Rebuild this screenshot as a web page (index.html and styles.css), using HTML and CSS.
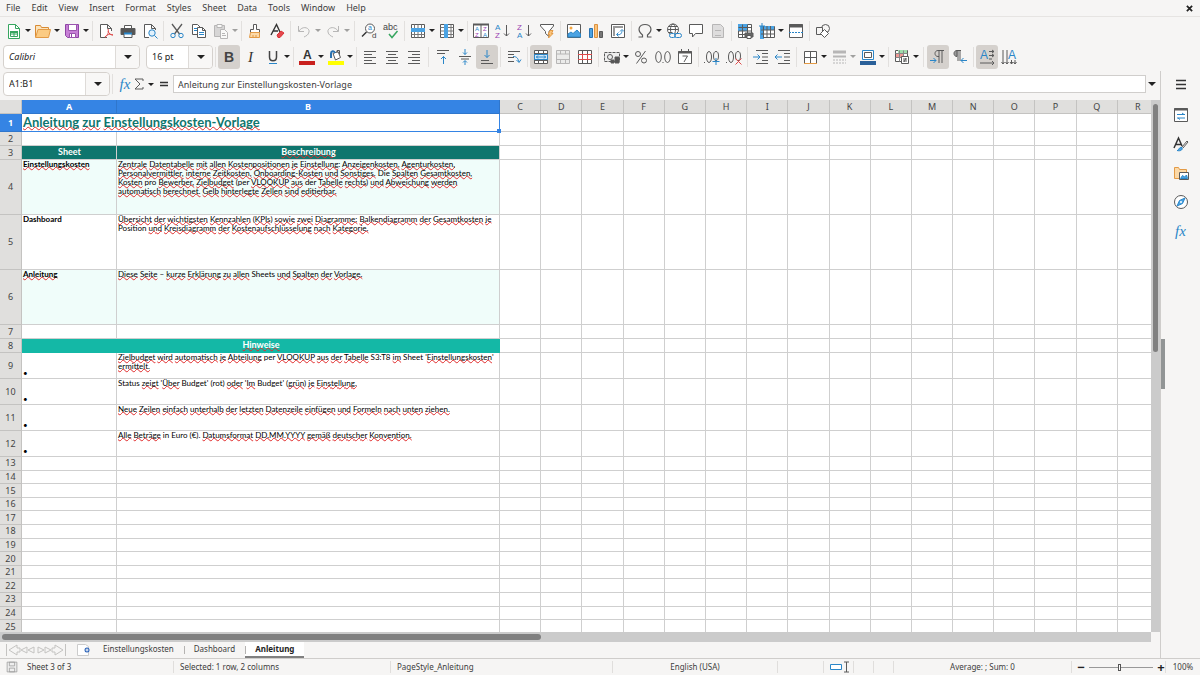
FILE: index.html
```
<!DOCTYPE html>
<html lang="de">
<head>
    <meta charset="UTF-8">
    <meta name="viewport" content="width=device-width, initial-scale=1.0">
    <title>Anleitung - Calc</title>
    <link rel="stylesheet" href="styles.css">
</head>
<body>
    <!-- Menu bar -->
    <nav class="menubar">
        <button>File</button><button>Edit</button><button>View</button><button>Insert</button><button>Format</button><button>Styles</button><button>Sheet</button><button>Data</button><button>Tools</button><button>Window</button><button>Help</button>
        <button class="close" aria-label="Close"><svg viewBox="0 0 8 8" width="7" height="7"><path d="M1 1l6 6M7 1L1 7" stroke="#222" stroke-width="2"/></svg></button>
    </nav>

    <!-- Standard toolbar -->
    <div class="toolbar standard">
        <button class="tool drop" aria-label="New"><svg viewBox="0 0 16 16"><path class="g" fill="#fff" d="M2.500 1.500h7l4 4v10h-11z"/><path class="g" d="M9.500 1.500v4h4M4.500 8.500h7v5h-7zM4.500 11h7M8 8.500v5"/><path d="M4 8h8v2H4z" fill="#37a660" stroke="none"/></svg></button>
        <button class="tool drop" aria-label="Open"><svg viewBox="0 0 16 16"><path d="M.5 14V2.500h5l1 2h7v3" fill="#fbe3bb" stroke="#d98b34"/><path d="M.5 14.500L3 6.500h12.500l-2 8z" fill="#fbcb83" stroke="#e39a45"/></svg></button>
        <button class="tool drop" aria-label="Save"><svg viewBox="0 0 16 16"><path d="M1.500 1.500h13v13h-11l-2-2z" fill="#c77fd6" stroke="#8e44a5"/><path d="M4.500 1.500h8v6h-8zM5.500 10.500h6v4h-6z" fill="#fff" stroke="#9a55ae"/><path d="M7.500 11v3" stroke="#8e44a5"/></svg></button>
        <span class="sep"></span>
        <button class="tool" aria-label="Export as PDF"><svg viewBox="0 0 16 16"><path fill="#fff" d="M9 14.500H2.500v-13h7l4 4V8M9.500 1.500v4h4"/><path class="r" d="M10 6c1 3 0 6-3 8.500M10 8c1 3 3 4 5 4M7 14c2-3 5-3 8-2"/></svg></button>
        <button class="tool" aria-label="Print"><svg viewBox="0 0 16 16"><path d="M4.500 5V2.500h7V5" fill="#fff"/><path d="M1 5.500h14v6H1z" fill="#555"/><path d="M4 10.500h8v4H4z" fill="#fff" stroke="#555"/><path class="b" d="M4 10.500h8" stroke-width="2"/></svg></button>
        <button class="tool" aria-label="Print preview"><svg viewBox="0 0 16 16"><path fill="#fff" d="M7 14.500H2.500v-13h7l4 4V7M9.500 1.500v4h4"/><circle class="b" cx="10" cy="10" r="3.200" fill="#e2f1fc"/><path class="b" d="M12.500 12.500l3 3"/></svg></button>
        <span class="sep"></span>
        <button class="tool" aria-label="Cut"><svg viewBox="0 0 16 16"><path stroke-width="1.300" d="M3 1l7.500 10M13 1L5.500 11"/><circle class="b" cx="4" cy="12.500" r="2.200"/><circle class="b" cx="12" cy="12.500" r="2.200"/></svg></button>
        <button class="tool" aria-label="Copy"><svg viewBox="0 0 16 16"><path fill="#fff" d="M1.500 1.500h5l3 3v7h-8z"/><path class="b" d="M3 5.500h3M3 7.500h3"/><path fill="#fff" d="M6.500 4.500h5l3 3v7h-8z"/><path d="M11.500 4.500v3h3"/><path class="b" d="M8 9.500h5M8 11.500h5"/></svg></button>
        <button class="tool drop dim" aria-label="Paste"><svg viewBox="0 0 16 16"><path fill="#aaa" d="M1.500 2.500h10v11h-10z"/><path fill="#fff" d="M4 1.500h5v3H4zM7.500 6.500h4l3 3v6h-7z"/><path d="M9 10.500h3M9 12.500h4"/></svg></button>
        <span class="sep"></span>
        <button class="tool" aria-label="Clone formatting"><svg viewBox="0 0 16 16"><path fill="#fff" d="M6.500 1.500h3v5h3v3h-9v-3h3z"/><path class="o" fill="#fbd9a8" d="M3.500 9.500h9v5h-10z"/><path class="o" d="M6 12v2M9 12v2"/></svg></button>
        <button class="tool" aria-label="Clear formatting"><svg viewBox="0 0 16 16"><path stroke="#333" stroke-width="1.400" d="M2 12L7.500 1.500L11 9M4 8h5"/><path fill="#e5484d" stroke="#d93237" d="M8 12l4-4 3 2-4 4.500H9z"/></svg></button>
        <span class="sep"></span>
        <button class="tool drop dim" aria-label="Undo"><svg viewBox="0 0 16 16"><path d="M2.500 3v5.500H8M3 8c4-6 11-3 10 1-.5 3-3 4-5 5"/></svg></button>
        <button class="tool drop dim" aria-label="Redo"><svg viewBox="0 0 16 16"><path d="M13.500 3v5.500H8M13 8C9 2 2 5 3 9c.5 3 3 4 5 5"/></svg></button>
        <span class="sep wide"></span>
        <button class="tool" aria-label="Find and replace"><svg viewBox="0 0 16 16"><circle cx="9" cy="5.500" r="4.500" fill="#fff"/><path stroke="#333" stroke-width="1.500" d="M5.500 9L1 13.500"/><text x="7" y="7" font-size="7" fill="#2a86c8">a</text><text x="11" y="15" font-size="8" fill="#444">d</text></svg></button>
        <button class="tool" aria-label="Spelling"><svg viewBox="0 0 16 16"><text x="0" y="7" font-size="9" fill="#444">abc</text><path class="g" stroke-width="1.500" d="M6 11l3 3.500L14.500 8"/></svg></button>
        <span class="sep"></span>
        <button class="tool drop" aria-label="Row"><svg viewBox="0 0 16 16"><path fill="#fff" d="M1.500 1.500h13v13h-13z"/><path d="M1.500 11.500h13M4.500 1.500v13M8 1.500v13M11.500 1.500v13" stroke="#777"/><path fill="#4ba3e3" stroke="none" d="M1 5h14v4H1z"/></svg></button>
        <button class="tool drop" aria-label="Column"><svg viewBox="0 0 16 16"><path fill="#fff" d="M1.500 1.500h13v13h-13z"/><path d="M12 1.500v13M1.500 4.500h13M1.500 8h13M1.500 11.500h13" stroke="#777"/><path fill="#4ba3e3" stroke="none" d="M5 1h4v14H5z"/></svg></button>
        <span class="sep"></span>
        <button class="tool" aria-label="Sort"><svg viewBox="0 0 16 16"><path fill="#fff" d="M.5 1.500h15v13H.5zM8 1v14"/><path d="M0 1.500h16" stroke-width="2"/><g font-size="6"><text x="2" y="8" fill="#2a86c8">A</text><text x="2" y="14" fill="#9a42b0">Z</text><text x="10" y="8" fill="#9a42b0">Z</text><text x="10" y="14" fill="#2a86c8">A</text></g></svg></button>
        <button class="tool" aria-label="Sort ascending"><svg viewBox="0 0 16 16"><g font-size="8"><text x="0" y="7" fill="#2a86c8">A</text><text x="0" y="15" fill="#9a42b0">Z</text></g><path d="M11.500 2v11M9 10.500l2.500 2.500 2.500-2.500"/></svg></button>
        <button class="tool" aria-label="Sort descending"><svg viewBox="0 0 16 16"><g font-size="8"><text x="0" y="7" fill="#9a42b0">Z</text><text x="0" y="15" fill="#2a86c8">A</text></g><path d="M11.500 2v11M9 10.500l2.500 2.500 2.500-2.500"/></svg></button>
        <button class="tool" aria-label="AutoFilter"><svg viewBox="0 0 16 16"><path fill="#fff" d="M1.500 1.500h13v1.500L10 8.500v5L6.500 10.500v-2L1.500 3z"/><path class="o" fill="#fbc37a" d="M11 7.500h3l-1.500 3H14L9.500 15l1-3.500H9z"/></svg></button>
        <span class="sep"></span>
        <button class="tool" aria-label="Image"><svg viewBox="0 0 16 16"><path fill="#fff" d="M1.500 1.500h13v13h-13z"/><circle cx="5" cy="5" r="1.500" fill="#f5a742" stroke="none"/><path fill="#4ba3e3" stroke="#2a86c8" d="M2 14v-3l3-2 2 1.500L11 7l3.500 4v3z"/></svg></button>
        <button class="tool" aria-label="Chart"><svg viewBox="0 0 16 16"><path fill="#4ba3e3" stroke="#2a72b0" d="M1.500 5.500h3v9h-3z"/><path fill="#fbc37a" stroke="#dc9240" d="M6.500 1.500h3v13h-3z"/><path fill="#777" d="M11.500 8.500h3v6h-3z"/></svg></button>
        <button class="tool" aria-label="Pivot table"><svg viewBox="0 0 16 16"><path fill="#fff" d="M1.500 1.500h13v13h-13z"/><path stroke="#999" stroke-width="2" d="M3 4h10M4 3v10"/><path class="b" d="M7 11.500c3 1 5-1 5-4M10 8.500l2-2 2 2M8.500 9.500l-2 2 2 2"/></svg></button>
        <span class="sep"></span>
        <button class="tool drop" aria-label="Special character"><svg viewBox="0 0 16 16"><path stroke-width="1.200" d="M1.500 14h4v-2C-.5 7 2 1.500 8 1.500s8.500 5.500 2.500 10.500v2h4"/></svg></button>
        <button class="tool" aria-label="Hyperlink"><svg viewBox="0 0 16 16"><circle cx="7" cy="6.500" r="5.500" fill="#fff"/><ellipse cx="7" cy="6.500" rx="2.500" ry="5.500"/><path d="M1.500 6.500h11M2.500 3.500h9M2.500 9.500h4"/><rect class="b" x="3.500" y="10.500" width="6" height="4" rx="2" fill="#f6f5f4"/><rect class="b" x="8.500" y="10.500" width="7" height="4" rx="2"/></svg></button>
        <button class="tool" aria-label="Comment"><svg viewBox="0 0 16 16"><path fill="#fff" d="M1.500 1.500h13v9H7.500L4.500 14v-3.500h-3z"/></svg></button>
        <button class="tool dim" aria-label="Headers and footers"><svg viewBox="0 0 16 16"><path fill="#bbb" d="M2.500 1.500h8l3 3v10h-11z"/><path d="M5 7.500h6M5 12.500h6"/></svg></button>
        <span class="sep"></span>
        <button class="tool" aria-label="Print area"><svg viewBox="0 0 16 16"><path fill="#fff" d="M1.500 1.500h13v13h-13z"/><path fill="#4ba3e3" stroke="none" d="M1 1h10v7H1z"/><path d="M1.500 4.500h13M1.500 8h13M1.500 11.500h13M5.500 1.500v13M10.500 1.500v13"/><path fill="#666" d="M8 10h8v4H8z"/><path fill="#fff" d="M10 12.500h4v3h-4z"/></svg></button>
        <button class="tool drop" aria-label="Freeze"><svg viewBox="0 0 16 16"><path fill="#fff" d="M3.500 3.500h12v11h-12z"/><path fill="#4ba3e3" stroke="none" d="M1 3h14v4H5v9H1z"/><path d="M4.500 3v12M8 3v12M11.500 3v12M2 7h13M2 11h13"/><path class="b" d="M3 0v6M0 3h6"/></svg></button>
        <button class="tool" aria-label="Split window"><svg viewBox="0 0 16 16"><path fill="#fff" d="M1.500 1.500h13v13h-13z"/><path d="M1 3h14" stroke-width="3"/><path class="b" d="M1 9.500h14" stroke-dasharray="2 1"/></svg></button>
        <span class="sep"></span>
        <button class="tool" aria-label="Draw functions"><svg viewBox="0 0 16 16"><circle cx="10.500" cy="5.500" r="4"/><path fill="#f6f5f4" d="M1.500 4.500h6v7h-6z"/><path fill="#fff" d="M9.500 6.500l4 4-4 4-4-4z"/></svg></button>
    </div>

    <!-- Formatting toolbar -->
    <div class="toolbar formatting">
        <div class="combo font-name"><input type="text" value="Calibri" aria-label="Font name"><button aria-label="Show fonts"></button></div>
        <div class="combo font-size"><input type="text" value="16 pt" aria-label="Font size"><button aria-label="Show sizes"></button></div>
        <span class="sep"></span>
        <button class="tool on" aria-label="Bold"><svg viewBox="0 0 16 16"><text x="3" y="13" font-size="14" font-weight="bold" fill="#444">B</text></svg></button>
        <button class="tool" aria-label="Italic"><svg viewBox="0 0 16 16"><text class="serif" x="5" y="13" font-size="15" font-style="italic" fill="#333">I</text></svg></button>
        <button class="tool drop" aria-label="Underline"><svg viewBox="0 0 16 16"><path stroke-width="1.500" stroke="#444" d="M4.500 2v6c0 5 7 5 7 0V2"/><path class="b" d="M4 14.500h8"/></svg></button>
        <span class="sep"></span>
        <button class="tool drop" aria-label="Font color"><svg viewBox="0 0 16 16"><text x="4" y="10" font-size="12" fill="#333" font-weight="bold">A</text><path fill="#c9211e" stroke="none" d="M0 12h16v4H0z"/></svg></button>
        <button class="tool drop" aria-label="Highlighting"><svg viewBox="0 0 16 16"><path fill="#fff" d="M5 4.500l5-2 2.500 6-5 2.500z"/><path stroke="#2a72b0" stroke-width="2" d="M3 9V4.500C3 2 6 1 7 4"/><path d="M9 4V1.500h2.500v4"/><path fill="#ff0" stroke="none" d="M0 12h16v4H0z"/></svg></button>
        <span class="sep"></span>
        <button class="tool" aria-label="Align left"><svg viewBox="0 0 16 16"><path d="M2 2.500h12M2 5.500h8M2 8.500h12M2 11.500h8M2 14.500h12"/></svg></button>
        <button class="tool" aria-label="Center horizontally"><svg viewBox="0 0 16 16"><path d="M2 2.500h12M4 5.500h8M2 8.500h12M4 11.500h8M2 14.500h12"/></svg></button>
        <button class="tool" aria-label="Align right"><svg viewBox="0 0 16 16"><path d="M2 2.500h12M6 5.500h8M2 8.500h12M6 11.500h8M2 14.500h12"/></svg></button>
        <span class="sep wide"></span>
        <button class="tool" aria-label="Align top"><svg viewBox="0 0 16 16"><path d="M2 1.500h12M2 4.500h8"/><path class="b" d="M8.500 15V7.500M6 10l2.500-2.500L11 10"/></svg></button>
        <button class="tool" aria-label="Center vertically"><svg viewBox="0 0 16 16"><path d="M2 7.500h12M4 10h8"/><path class="b" d="M8 0v5.500M6 3.500l2 2 2-2M8 16v-4M6 13.500l2-2 2 2"/></svg></button>
        <button class="tool on" aria-label="Align bottom"><svg viewBox="0 0 16 16"><path d="M2 11.500h8M2 14.500h12"/><path class="b" d="M8 1v7.500M5.500 6L8 8.500 10.500 6"/></svg></button>
        <span class="sep"></span>
        <button class="tool" aria-label="Wrap text"><svg viewBox="0 0 16 16"><path d="M2 2.500h12M2 5.500h6M2 8.500h6M2 12.500h6"/><path class="b" d="M7 7.500c4 0 5 2 6 5.500M10.500 11l2.500 2.500 2-3"/></svg></button>
        <span class="sep"></span>
        <button class="tool on" aria-label="Merge and center"><svg viewBox="0 0 16 16"><path fill="#fff" d="M1.500 1.500h13v13h-13z"/><path d="M1.500 4.500h13M1.500 11.500h13M5.500 1.500v3M10.500 1.500v3M5.500 11.500v3M10.500 11.500v3"/><path class="b" fill="#cfe6f8" d="M1.500 5.500h13v5h-13z"/><path class="b" d="M3 8h10M5 6.500L3.500 8 5 9.500M11 6.500L12.500 8 11 9.500"/></svg></button>
        <button class="tool dim" aria-label="Merge cells"><svg viewBox="0 0 16 16"><path fill="#ddd" d="M1.500 1.500h13v13h-13zM1.500 5h13M1.500 10.500h13M5.500 1.500V5M10.500 1.500V5M5.500 10.500v4M10.500 10.500v4"/></svg></button>
        <button class="tool" aria-label="Unmerge cells"><svg viewBox="0 0 16 16"><path fill="#fff" d="M1.500 1.500h13v13h-13z"/><path d="M5.500 1.500v13M10.500 1.500v13"/><path class="r" d="M1 5.500h14M1 10.500h14M5.500 5v6M10.500 5v6"/></svg></button>
        <span class="sep"></span>
        <button class="tool drop" aria-label="Currency"><svg viewBox="0 0 16 16"><path fill="#eee" d="M.5 3.500h15v9H.5z" stroke-dasharray="3 1"/><circle cx="6" cy="8" r="2.500"/><path fill="#555" d="M7 11h3v3H7zM11 8h4v6h-4z"/></svg></button>
        <button class="tool" aria-label="Percent"><svg viewBox="0 0 16 16"><circle cx="5" cy="5" r="2.500"/><circle cx="11" cy="11.500" r="2.500"/><path d="M12.500 2L3.500 14.500"/></svg></button>
        <button class="tool" aria-label="Number"><svg viewBox="0 0 16 16"><ellipse cx="3.500" cy="8" rx="2.800" ry="5.500"/><path d="M7.500 13.500h1"/><ellipse cx="12.500" cy="8" rx="2.800" ry="5.500"/></svg></button>
        <button class="tool" aria-label="Date"><svg viewBox="0 0 16 16"><path fill="#fff" d="M1.500 2.500h13v12h-13z"/><path d="M1 3.500h14" stroke-width="2"/><path d="M4.500 0v3M11.500 0v3M5.500 7h5L7 13"/></svg></button>
        <span class="sep"></span>
        <button class="tool" aria-label="Add decimal place"><svg viewBox="0 0 16 16"><path d="M0 13.500h1"/><ellipse cx="5" cy="8" rx="2.500" ry="5.500"/><ellipse cx="12" cy="7" rx="2.500" ry="4.500"/><path class="b" d="M12 9v7M8.500 12.500h7"/></svg></button>
        <button class="tool" aria-label="Delete decimal place"><svg viewBox="0 0 16 16"><path d="M0 13.500h1"/><ellipse cx="5" cy="8" rx="2.500" ry="5.500"/><ellipse cx="12" cy="7" rx="2.500" ry="4.500"/><path class="r" d="M9.500 9.500l6 6M15.500 9.500l-6 6"/></svg></button>
        <span class="sep"></span>
        <button class="tool" aria-label="Increase indent"><svg viewBox="0 0 16 16"><path d="M3 1.500h12M9 4.500h6M9 8h6M9 11.500h6M3 14.500h12"/><path class="b" d="M0 8h7M4.500 5.500L7 8l-2.500 2.500"/></svg></button>
        <button class="tool" aria-label="Decrease indent"><svg viewBox="0 0 16 16"><path d="M3 1.500h12M9 4.500h6M9 8h6M9 11.500h6M3 14.500h12"/><path class="b" d="M0 8h7M2.500 5.500L0 8l2.500 2.500"/></svg></button>
        <span class="sep"></span>
        <button class="tool drop" aria-label="Borders"><svg viewBox="0 0 16 16"><path fill="#fff" d="M2.500 2.500h12v12h-12zM8.500 2.500v12M2.500 8.500h12"/><path class="o" d="M2 14.500h13"/></svg></button>
        <button class="tool drop dim" aria-label="Border style"><svg viewBox="0 0 16 16"><path d="M2 3h13" stroke-width="3"/><path d="M2 7.500h13" stroke-width="2"/><path d="M2 11h13M2 14h13" stroke-dasharray="2 1"/></svg></button>
        <button class="tool drop" aria-label="Border color"><svg viewBox="0 0 16 16"><path fill="#fff" class="b" d="M2.500 1.500h11v9h-11z"/><path d="M4.500 3.500h7v5h-7z"/><path fill="#2a6099" stroke="none" d="M0 12h16v4H0z"/></svg></button>
        <span class="sep"></span>
        <button class="tool drop" aria-label="Conditional"><svg viewBox="0 0 16 16"><path fill="#fff" d="M1.500 1.500h12v11h-12z"/><path fill="#9fdcac" stroke="none" d="M4 1h9v3H4z"/><path fill="#ef9a95" stroke="none" d="M2 5h7v4H2z"/><path d="M1.500 4.500h12M1.500 8.500h12M5.500 1.500v11M9.500 1.500v11" stroke="#888"/><path fill="#fff" d="M7.500 7.500h7v7h-7zM9 10h4M9 12h4M12 9l-2 4"/></svg></button>
        <span class="sep wide"></span>
        <button class="tool on" aria-label="Left-to-right"><svg viewBox="0 0 16 16"><path d="M14 1.500H8C4 1.500 4 7.500 8 7.500h1M9 1.500V14M12 1.500V14"/><path class="b" d="M0 11.500h6M3.500 9L6 11.500 3.500 14"/></svg></button>
        <button class="tool" aria-label="Right-to-left"><svg viewBox="0 0 16 16"><path fill="#999" d="M5 1.500C1 1.500 1 7.500 5 7.500z"/><path d="M9 1.500H5M6 1.500V12M8 1.500V12"/><path class="b" d="M15 11.500H9M11.500 9L9 11.500l2.500 2.500"/></svg></button>
        <span class="sep"></span>
        <button class="tool on" aria-label="Text left to right"><svg viewBox="0 0 16 16"><text x="1" y="10" font-size="12" fill="#2a86c8">A</text><path d="M10 2.500h5M10 6.500h5M10 10h3M1 14h14M13 1l2 1.500L13 4M13 5l2 1.500L13 8M13 12l2 2-2 2"/></svg></button>
        <button class="tool" aria-label="Text top to bottom"><svg viewBox="0 0 16 16"><text x="7" y="10" font-size="12" fill="#2a86c8">A</text><path d="M2 1v14M6 1v14M10.500 11v4M14 11v4M.5 13L2 15l1.500-2M4.500 13L6 15l1.500-2M9 13l1.500 2 1.500-2M12.500 13l1.500 2 1.500-2"/></svg></button>
    </div>

    <div class="workspace">
        <main class="document">
            <!-- Formula bar -->
            <div class="formula-bar">
                <div class="combo name-box"><input type="text" value="A1:B1" aria-label="Name box"><button aria-label="Show names"></button></div>
                <span class="sep"></span>
                <button class="fx" aria-label="Function wizard"><i>fx</i></button>
                <button class="sum" aria-label="Select function"><svg viewBox="0 0 10 12" width="10" height="12"><path d="M9 3V1H1l5 5-5 5h8V9"/></svg></button>
                <button class="equals" aria-label="Formula"><svg viewBox="0 0 8 8" width="8" height="8"><path d="M0 2.500h8M0 5.500h8" stroke="#333" stroke-width="1.300"/></svg></button>
                <input class="formula" type="text" value="Anleitung zur Einstellungskosten-Vorlage" aria-label="Input line">
                <button class="expand" aria-label="Expand formula bar"></button>
            </div>

            <div class="grid-area">
                <div class="grid">
                    <table class="sheet">
                        <colgroup id="cols"><col class="col-num"><col class="col-a"><col class="col-b"></colgroup>
                        <thead>
                            <tr id="head"><th></th><th class="sel">A</th><th class="sel">B</th></tr>
                        </thead>
                        <tbody id="rows">
                            <tr class="r-title"><th class="sel">1</th><td class="title" colspan="2"><u>Anleitung</u> <u>zur</u> <u>Einstellungskosten-Vorlage</u></td></tr>
                            <tr class="r-small"><th>2</th><td></td><td></td></tr>
                            <tr class="r-small dark"><th>3</th><td>Sheet</td><td><u>Beschreibung</u></td></tr>
                            <tr class="r-tall pale"><th>4</th><td><u>Einstellungskosten</u></td><td><u>Zentrale</u> <u>Datentabelle</u> <u>mit</u> <u>allen</u> <u>Kostenpositionen</u> <u>je</u> <u>Einstellung</u>: <u>Anzeigenkosten,</u> <u>Agenturkosten,</u><br><u>Personalvermittler,</u> <u>interne</u> <u>Zeitkosten,</u> <u>Onboarding-Kosten</u> <u>und</u> <u>Sonstiges.</u> Die <u>Spalten</u> <u>Gesamtkosten,</u><br><u>Kosten</u> pro <u>Bewerber,</u> <u>Zielbudget</u> (per <u>VLOOKUP</u> <u>aus</u> der <u>Tabelle</u> <u>rechts</u>) <u>und</u> <u>Abweichung</u> <u>werden</u><br><u>automatisch</u> <u>berechnet.</u> <u>Gelb</u> <u>hinterlegte</u> <u>Zellen</u> <u>sind</u> <u>editierbar.</u></td></tr>
                            <tr class="r-tall"><th>5</th><td>Dashboard</td><td><u>Übersicht</u> <u>der</u> <u>wichtigsten</u> <u>Kennzahlen</u> (<u>KPIs</u>) <u>sowie</u> <u>zwei</u> <u>Diagramme:</u> <u>Balkendiagramm</u> <u>der</u> <u>Gesamtkosten</u> <u>je</u><br>Position <u>und</u> <u>Kreisdiagramm</u> <u>der</u> <u>Kostenaufschlüsselung</u> <u>nach</u> <u>Kategorie.</u></td></tr>
                            <tr class="r-tall pale"><th>6</th><td><u>Anleitung</u></td><td><u>Diese</u> <u>Seite</u> – <u>kurze</u> <u>Erklärung</u> <u>zu</u> <u>allen</u> Sheets <u>und</u> <u>Spalten</u> <u>der</u> <u>Vorlage.</u></td></tr>
                            <tr class="r-small"><th>7</th><td></td><td></td></tr>
                            <tr class="r-small teal"><th>8</th><td colspan="2"><u>Hinweise</u></td></tr>
                            <tr class="r-note"><th>9</th><td>•</td><td><u>Zielbudget</u> <u>wird</u> <u>automatisch</u> <u>je</u> <u>Abteilung</u> per <u>VLOOKUP</u> <u>aus</u> <u>der</u> <u>Tabelle</u> S3:T8 <u>im</u> Sheet '<u>Einstellungskosten</u>'<br><u>ermittelt.</u></td></tr>
                            <tr class="r-note"><th>10</th><td>•</td><td>Status <u>zeigt</u> '<u>Über</u> Budget' (rot) <u>oder</u> '<u>Im</u> Budget' (<u>grün</u>) <u>je</u> <u>Einstellung.</u></td></tr>
                            <tr class="r-note"><th>11</th><td>•</td><td><u>Neue</u> <u>Zeilen</u> <u>einfach</u> <u>unterhalb</u> <u>der</u> <u>letzten</u> <u>Datenzeile</u> <u>einfügen</u> <u>und</u> <u>Formeln</u> <u>nach</u> <u>unten</u> <u>ziehen.</u></td></tr>
                            <tr class="r-note"><th>12</th><td>•</td><td><u>Alle</u> <u>Beträge</u> in Euro (€). <u>Datumsformat</u> <u>DD.MM.YYYY</u> <u>gemäß</u> <u>deutscher</u> <u>Konvention.</u></td></tr>
                        </tbody>
                    </table>
                </div>
                <div class="vscroll"><div class="thumb"></div></div>
            </div>
            <div class="hscroll"><div class="thumb"></div></div>

            <!-- Sheet tabs -->
            <div class="tabs">
                <button class="nav" aria-label="Scroll sheets"><svg viewBox="0 0 62 14" width="62" height="14"><path stroke="#c4c3c1" d="M1.500 1v12M12 2L4 7l8 5V9h3V5h-3zM22 4l-6 3 6 3zM29 4l-6 3 6 3zM33 4l6 3-6 3zM40 4l6 3-6 3zM50 2l8 5-8 5V9h-3V5h3zM60.500 1v12"/></svg></button>
                <button class="add" aria-label="Add sheet"><svg viewBox="0 0 16 14" width="16" height="14"><path d="M1.500 1.500h8l3 2v9h-11z" fill="#fff" stroke="#ccc"/><circle cx="11" cy="7" r="2.500" fill="#2a62b8" stroke="none"/><path d="M11 5.500v3M9.500 7h3" stroke="#fff"/></svg></button>
                <button class="tab">Einstellungskosten</button>
                <button class="tab">Dashboard</button>
                <button class="tab active">Anleitung</button>
            </div>
        </main>

        <!-- Sidebar -->
        <aside class="sidebar">
            <span class="handle"></span>
            <button class="settings" aria-label="Sidebar settings"><svg viewBox="0 0 16 16"><path stroke="#333" stroke-width="1.400" d="M3 4.500h10M3 8.500h10M3 12.500h10"/></svg></button>
            <button aria-label="Properties"><svg viewBox="0 0 16 16"><path fill="#fff" d="M1.500 1.500h13v13h-13z"/><path stroke-width="2" d="M1 2.500h14"/><path class="b" d="M4 7.500h8M4 11h8M9 6l2 1.500M7 12.500L5 11"/></svg></button>
            <button aria-label="Styles"><svg viewBox="0 0 16 16"><path stroke="#333" stroke-width="1.500" d="M1 12L5.500 2 9 10M3 8.500h5"/><path class="b" fill="#4ba3e3" d="M4 14.500c2 0 2-4 5-3 1 2-1 4-5 3z"/><path d="M9 11l5-6 1 1-5 6"/></svg></button>
            <button aria-label="Gallery"><svg viewBox="0 0 16 16"><path class="o" fill="#fbd9a8" d="M1.500 13.500v-11h4l1 2h7v9z"/><path fill="#fff" d="M6.500 7.500h9v7h-9z"/><path fill="#4ba3e3" class="b" d="M7.500 13.500l2-3 2 1.500 2-2 1 3.500z"/></svg></button>
            <button aria-label="Navigator"><svg viewBox="0 0 16 16"><circle cx="8" cy="8" r="6.500" fill="#fff"/><path class="b" fill="#4ba3e3" d="M12 4L9.500 9.500 4 12l2.500-5.500z"/><circle cx="8" cy="8" r="1" fill="#fff" stroke="none"/></svg></button>
            <button class="fx" aria-label="Functions"><i>fx</i></button>
        </aside>
    </div>

    <!-- Status bar -->
    <footer class="status">
        <svg class="doc-state" viewBox="0 0 16 16" width="12" height="12"><path fill="#eee" stroke="#999" d="M1.500 1.500h13v13h-13zM4.500 1.500h7v5h-7zM4.500 9.500h7v5h-7z"/></svg>
        <span class="st-sheet">Sheet 3 of 3</span>
        <span class="st-sel">Selected: 1 row, 2 columns</span>
        <span class="st-page">PageStyle_Anleitung</span>
        <span class="st-lang">English (USA)</span>
        <span class="st-insert"></span>
        <span class="st-mode"><svg viewBox="0 0 20 12" width="20" height="12"><path class="b" fill="#fff" d="M.5 3.500h11v5H.5z"/><path d="M14 1h5M16.500 1v10M14 11h5"/></svg></span>
        <span class="st-empty"></span>
        <span class="st-empty"></span>
        <span class="st-sum">Average: ; Sum: 0</span>
        <span class="st-zoom"><button aria-label="Zoom out">−</button><input type="range" min="0" max="100" value="48" aria-label="Zoom"><button aria-label="Zoom in">+</button></span>
        <span class="st-percent">100%</span>
    </footer>

    <script src="script.js"></script>
</body>
</html>
```

FILE: styles.css
```
* {
    margin: 0;
    padding: 0;
    box-sizing: border-box;
}

body {
    font-family: "Noto Sans", sans-serif;
    font-size: 9px;
    line-height: 12px;
    color: #3d3d3d;
    background: #f6f5f4;
    height: 100vh;
    display: flex;
    flex-direction: column;
    overflow: hidden;
}

button,
input {
    font: inherit;
    color: inherit;
    background: none;
    border: none;
    outline: none;
    min-width: 0;
}

svg {
    fill: none;
    stroke: #5a5a5a;
    display: block;
    overflow: visible;
}

svg text {
    stroke: none;
    font-family: "Liberation Sans", sans-serif;
}

svg .serif {
    font-family: "Liberation Serif", serif;
}

svg .b { stroke: #2a86c8; }
svg .g { stroke: #37a660; }
svg .r { stroke: #df4b4b; }
svg .o { stroke: #e39a45; }

/* Menu bar */
.menubar {
    display: flex;
    align-items: center;
    gap: 11px;
    height: 17px;
    padding: 0 7px 0 6px;
    border-bottom: 1px solid #e6e4e2;
}

.menubar .close {
    margin-left: auto;
}

/* Toolbars */
.toolbar {
    display: flex;
    align-items: center;
    height: 27px;
    padding-left: 3px;
}

.formatting {
    padding-bottom: 2px;
}

.tool {
    flex: none;
    display: flex;
    align-items: center;
    width: 22px;
    height: 24px;
    padding-left: 3px;
    border-radius: 3px;
}

.tool svg {
    flex: none;
    width: 16px;
    height: 16px;
}

.tool.drop {
    width: 29px;
}

.tool.drop::after,
.combo button::after,
.expand::after,
.sum::after {
    content: "";
    flex: none;
    border: 3px solid transparent;
    border-top: 3px solid #222;
    border-bottom: none;
}

.tool.drop::after {
    margin-left: 3px;
}

.tool.on {
    background: #d5d1cd;
}

.tool.dim {
    opacity: 0.4;
}

.sep {
    flex: none;
    width: 1px;
    height: 20px;
    margin: 0 2px;
    background: #e2e0de;
}

.sep.wide {
    margin: 0 3px;
}

.combo {
    flex: none;
    display: flex;
    height: 24px;
    background: #fff;
    border: 1px solid #d5d1cd;
    border-radius: 4px;
}

.combo input {
    flex: 1;
    padding-left: 5px;
    color: #222;
}

.combo button {
    display: flex;
    align-items: center;
    justify-content: center;
    width: 24px;
    background: #f8f7f6;
    border-left: 1px solid #dedbd8;
    border-radius: 0 4px 4px 0;
}

.combo button::after,
.expand::after {
    border-width: 4px 4px 0;
}

.font-name {
    width: 137px;
    margin-right: 6px;
}

.font-name input {
    font-style: italic;
}

.font-size {
    width: 67px;
}

/* Workspace */
.workspace {
    flex: 1;
    display: flex;
    min-height: 0;
}

.document {
    flex: 1;
    min-width: 0;
    display: flex;
    flex-direction: column;
    border-right: 1px solid #cfcdcb;
}

.formula-bar {
    display: flex;
    align-items: center;
    height: 29px;
    padding: 0 4px 3px 3px;
}

.name-box {
    width: 107px;
}

.fx {
    width: 16px;
    color: #2a86c8;
    font-family: "Liberation Serif", serif;
    font-size: 15px;
}

.formula-bar .fx {
    margin-left: 2px;
}

.sum {
    display: flex;
    align-items: center;
    gap: 4px;
    width: 24px;
    padding-left: 1px;
}

.equals {
    width: 16px;
    padding-left: 3px;
}

.formula {
    flex: 1;
    height: 18px;
    padding: 0 4px;
    background: #fff;
    border: 1px solid #d0cecc;
}

.expand {
    display: flex;
    margin-left: 2px;
}

.grid-area {
    flex: 1;
    display: flex;
    min-height: 0;
}

.grid {
    flex: 1;
    overflow: hidden;
    background: #fff;
}

/* a little larger than its box so that the last column and row are cut off */
.sheet {
    table-layout: fixed;
    border-collapse: separate;
    border-spacing: 0;
    width: calc(100% + 8px);
    height: calc(100% + 2px);
    color: #000;
}

.col-num { width: 22px; }
.col-a { width: 95px; }
.col-b { width: 383px; }

.sheet th {
    font-weight: normal;
    color: #444;
    background: #e0dfdd;
    border-right: 1px solid #c4c3c1;
    border-bottom: 1px solid #c4c3c1;
    line-height: 12px;
}

.sheet thead tr {
    height: 14px;
}

.sheet th.sel {
    color: #fff;
    font-weight: bold;
    background: #3584e4;
    border-color: #2f76cc;
}

.sheet td {
    font-family: Lato, Carlito, sans-serif;
    font-size: 8px;
    line-height: 9px;
    white-space: nowrap;
    vertical-align: top;
    padding-left: 1px;
    border-right: 1px solid #cfcfcf;
    border-bottom: 1px solid #cfcfcf;
}

.sheet u {
    text-decoration: underline wavy #e02b2b 1px;
    text-decoration-skip-ink: none;
    text-underline-offset: -1px;
}

.r-title { height: 18px; }
.r-small { height: 14px; }
.r-tall { height: 55px; }
.r-note { height: 26px; }

.sheet .title {
    position: relative;
    font-size: 13px;
    font-weight: bold;
    line-height: 17px;
    color: #0f766e;
    border-color: #3584e4;
}

.title::after {
    content: "";
    position: absolute;
    right: -2px;
    bottom: -2px;
    width: 4px;
    height: 4px;
    background: #3584e4;
}

.dark td,
.teal td {
    font-size: 9px;
    font-weight: bold;
    line-height: 12px;
    text-align: center;
    color: #fff;
}

.dark td:not(.blank) { background: #0f766e; }
.teal td:not(.blank) { background: #14b8a6; border-color: #14b8a6; }
.pale td:not(.blank) { background: #f0fdfa; }

.r-tall td:nth-child(2) {
    font-weight: bold;
}

.r-note td:nth-child(2) {
    vertical-align: bottom;
}

/* Scrollbars */
.vscroll {
    width: 9px;
    padding: 4px 2px 0;
    background: #cbcbcb;
}

.vscroll .thumb {
    height: 47%;
    border-radius: 3px;
    background: #808080;
}

.hscroll {
    height: 10px;
    margin-right: 9px;
    padding: 2px;
    background: #cbcbcb;
}

.hscroll .thumb {
    width: 47%;
    height: 6px;
    border-radius: 3px;
    background: #808080;
}

/* Sheet tabs */
.tabs {
    display: flex;
    height: 16px;
    padding-left: 5px;
    font-size: 8px;
}

.add {
    margin: 0 1px 0 9px;
}

.tab {
    padding: 0 10px 1px;
    border-bottom: 2px solid transparent;
    position: relative;
}

.tab + .tab::before {
    content: "";
    position: absolute;
    left: 0;
    top: 4px;
    height: 8px;
    border-left: 1px solid #b5b3b1;
}

.tab.active {
    font-weight: bold;
    color: #222;
    background: #fff;
    border-bottom-color: #808080;
}

/* Sidebar */
.sidebar {
    position: relative;
    width: 39px;
    display: flex;
    flex-direction: column;
    align-items: center;
    gap: 13px;
    padding-top: 5px;
}

.sidebar button,
.sidebar svg {
    width: 16px;
    height: 16px;
}

.sidebar .settings {
    margin-bottom: 2px;
}

.handle {
    position: absolute;
    left: 0;
    top: 268px;
    width: 4px;
    height: 50px;
    background: #929595;
}

/* Status bar */
.status {
    display: flex;
    align-items: center;
    height: 17px;
    padding-left: 6px;
    font-size: 8px;
    border-top: 1px solid #cfcdcb;
}

.status > span {
    height: 12px;
    border-right: 1px solid #e0dedc;
}

.doc-state { margin-right: 9px; }
.st-sheet { width: 147px; }
.st-sel { width: 217px; padding-left: 6px; }
.st-page { width: 222px; padding-left: 6px; }
.st-lang { flex: 1; text-align: center; }
.st-insert { width: 46px; }
.st-mode { width: 30px; padding-left: 6px; }
.st-empty { width: 20px; }
.st-sum { width: 178px; text-align: center; }

.st-zoom {
    display: flex;
    align-items: center;
    gap: 4px;
    width: 94px;
    padding-left: 5px;
}

.st-zoom button {
    width: 8px;
    font-size: 13px;
    font-weight: bold;
    color: #222;
}

.st-zoom input {
    flex: 1;
    appearance: none;
    height: 10px;
    background: linear-gradient(#999, #999) center / 100% 1px no-repeat;
}

.st-zoom input::-webkit-slider-thumb {
    appearance: none;
    width: 3px;
    height: 7px;
    background: #fff;
    border: 1px solid #555;
}

.status .st-percent {
    width: 34px;
    text-align: center;
    border-right: none;
}
```

FILE: script.js
```
const rows = document.getElementById('rows');
const letters = 'CDEFGHIJKLMNOPQR'.split('');

function addBlankCells(tr, count) {
    for (let i = 0; i < count; i++) {
        const td = document.createElement('td');
        td.className = 'blank';
        tr.appendChild(td);
    }
}

// Column headers C to R
letters.forEach(letter => {
    document.getElementById('cols').appendChild(document.createElement('col'));
    const th = document.createElement('th');
    th.textContent = letter;
    document.getElementById('head').appendChild(th);
});

for (const tr of rows.rows) {
    addBlankCells(tr, letters.length);
}

// Empty rows below the data
for (let n = 13; n <= 25; n++) {
    const tr = document.createElement('tr');
    const th = document.createElement('th');
    th.textContent = n;
    tr.appendChild(th);
    addBlankCells(tr, letters.length + 2);
    rows.appendChild(tr);
}
```
